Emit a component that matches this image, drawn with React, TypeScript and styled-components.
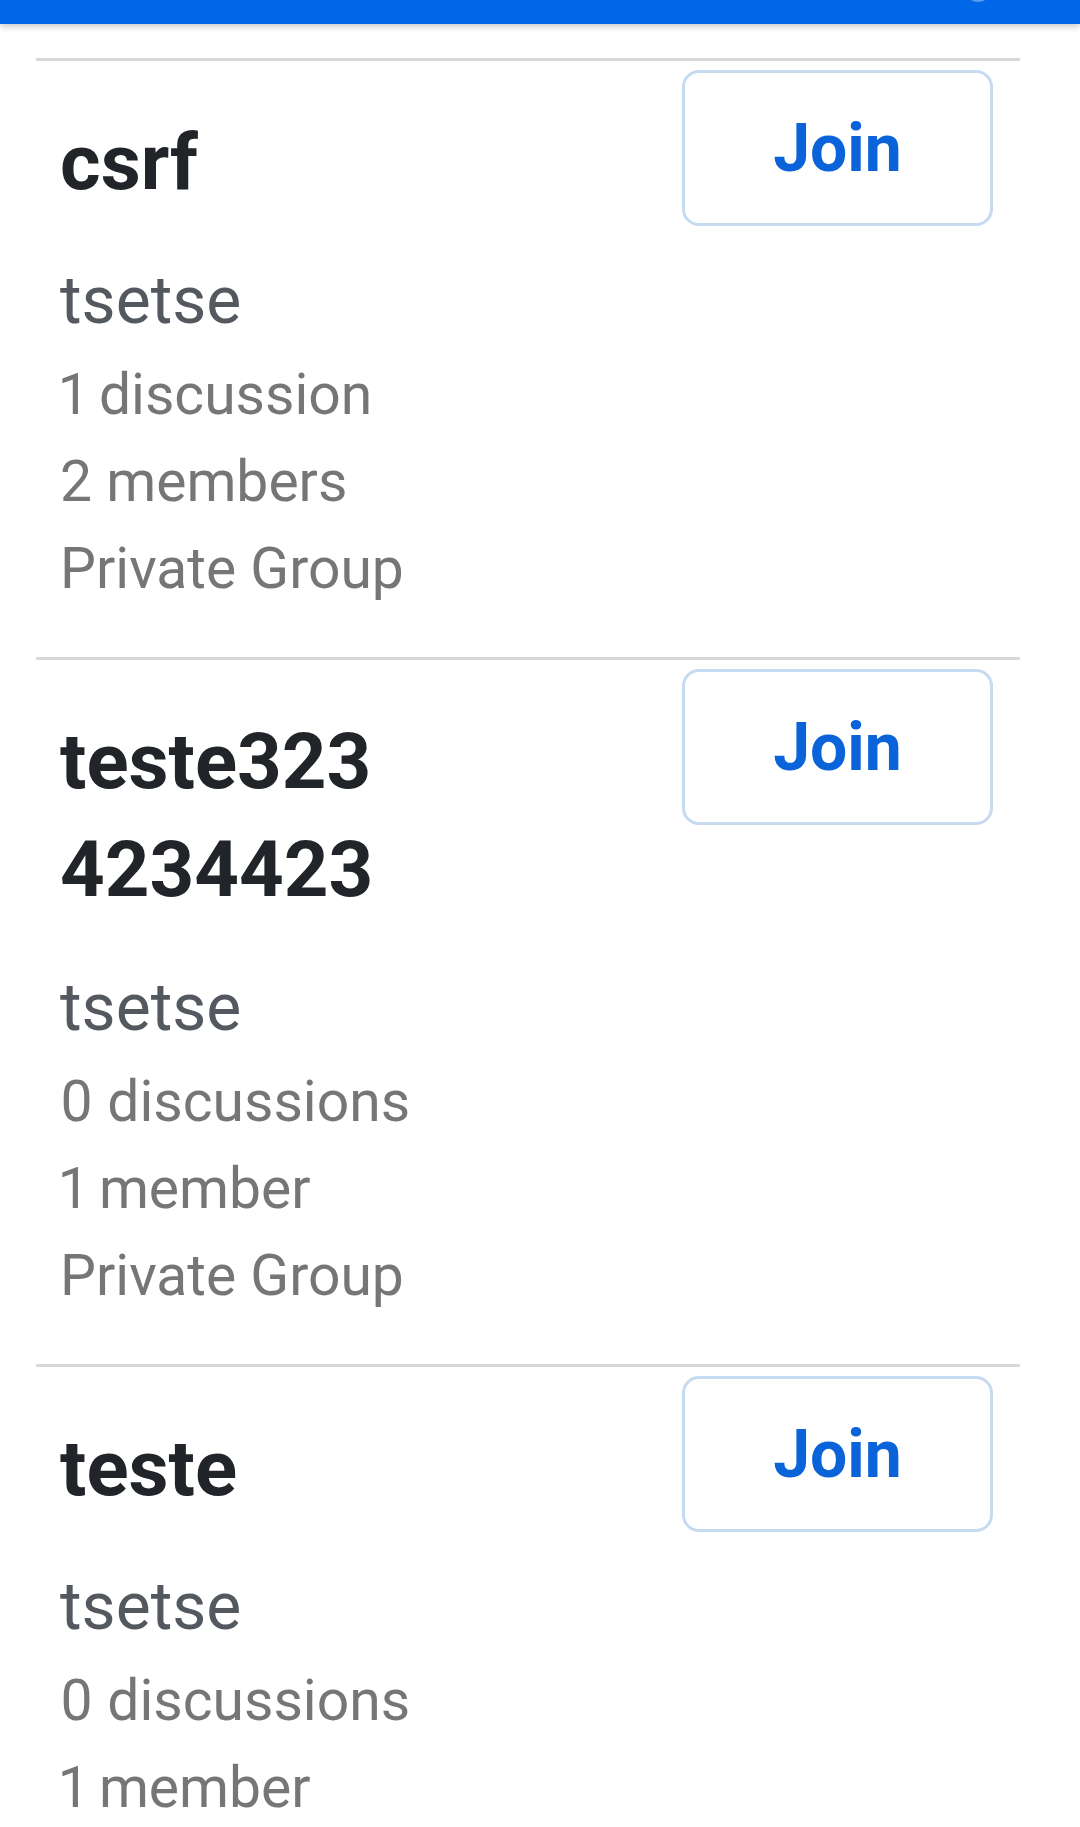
import React from "react";
import styled, { createGlobalStyle } from "styled-components";

const GlobalStyle = createGlobalStyle`
  html, body {
    margin: 0;
    padding: 0;
    background: #ffffff;
    overflow: hidden;
  }
  body {
    font-family: Roboto, "Noto Sans", "Liberation Sans", sans-serif;
    -webkit-font-smoothing: antialiased;
  }
  * { box-sizing: border-box; }
`;

const Page = styled.div`
  width: 1080px;
  height: 1827px;
  overflow: hidden;
  background: #ffffff;
`;

const TopBar = styled.header`
  position: relative;
  height: 24px;
  background: #0068e8;
  box-shadow: 0 3px 6px rgba(0, 0, 0, 0.2);
  overflow: hidden;
  z-index: 1;
`;

const AvatarEdge = styled.span`
  position: absolute;
  left: 964px;
  top: -26px;
  width: 28px;
  height: 28px;
  border-radius: 50%;
  background: rgba(255, 255, 255, 0.35);
`;

const List = styled.main`
  padding: 34px 60px 0 36px;
`;

const GroupItem = styled.section`
  display: flex;
  justify-content: space-between;
  align-items: flex-start;
  border-top: 3px solid #d6d7d8;
  padding-bottom: 45px;
`;

const Info = styled.div`
  flex: 1;
  min-width: 0;
  padding-left: 24px;
  padding-top: 48px;
`;

const Title = styled.h2`
  margin: 0;
  max-width: 340px;
  font-size: 78px;
  line-height: 108px;
  font-weight: 700;
  color: #212529;
  overflow-wrap: anywhere;
  word-break: break-all;
`;

const Owner = styled.div`
  margin-top: 39px;
  font-size: 66px;
  line-height: 90px;
  color: #545960;
`;

const MetaList = styled.div`
  margin-top: 5px;
  display: flex;
  flex-direction: column;
`;

const MetaLine = styled.div`
  font-size: 57px;
  line-height: 87px;
  color: #767676;
  white-space: nowrap;
  font-variant-numeric: proportional-nums;
`;

const JoinButton = styled.button`
  flex: 0 0 auto;
  margin-top: 9px;
  margin-right: 27px;
  width: 311px;
  height: 156px;
  border: 3px solid #c6daf1;
  border-radius: 17px;
  background: #ffffff;
  color: #0b63d9;
  font-family: Roboto, "Noto Sans", "Liberation Sans", sans-serif;
  font-size: 66px;
  font-weight: 700;
  display: flex;
  align-items: center;
  justify-content: center;
  padding: 0;
  cursor: pointer;
`;

type Group = {
  name: string;
  owner: string;
  discussions: number;
  members: number;
  privacy: string;
};

const groups: Group[] = [
  { name: "csrf", owner: "tsetse", discussions: 1, members: 2, privacy: "Private Group" },
  { name: "teste3234234423", owner: "tsetse", discussions: 0, members: 1, privacy: "Private Group" },
  { name: "teste", owner: "tsetse", discussions: 0, members: 1, privacy: "Private Group" },
];

const plural = (n: number, word: string) => `${n} ${word}${n === 1 ? "" : "s"}`;

export default function App() {
  return (
    <Page>
      <GlobalStyle />
      <TopBar>
        <AvatarEdge />
      </TopBar>
      <List>
        {groups.map((g) => (
          <GroupItem key={g.name}>
            <Info>
              <Title>{g.name}</Title>
              <Owner>{g.owner}</Owner>
              <MetaList>
                <MetaLine>{plural(g.discussions, "discussion")}</MetaLine>
                <MetaLine>{plural(g.members, "member")}</MetaLine>
                <MetaLine>{g.privacy}</MetaLine>
              </MetaList>
            </Info>
            <JoinButton type="button">Join</JoinButton>
          </GroupItem>
        ))}
      </List>
    </Page>
  );
}
